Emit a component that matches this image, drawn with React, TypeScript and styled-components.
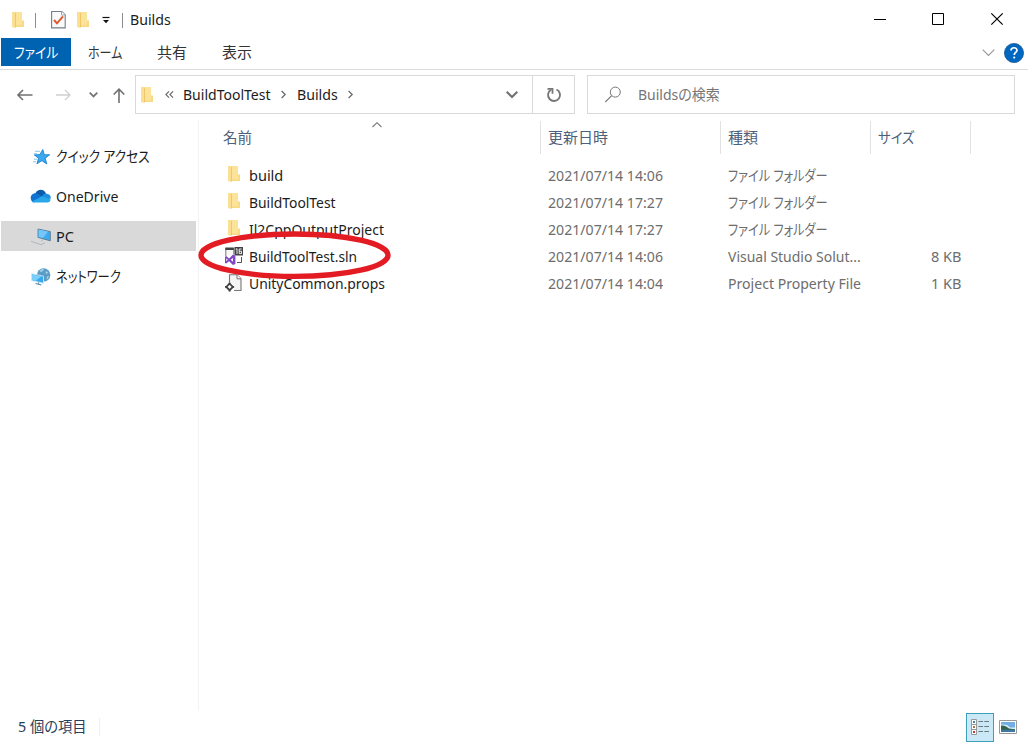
import React, { useLayoutEffect, useRef, useState } from "react";
import styled, { createGlobalStyle } from "styled-components";

const GlobalStyle = createGlobalStyle`
  * { box-sizing: border-box; }
  html, body { margin: 0; padding: 0; background: #fff; }
  body {
    font-family: "Noto Sans", "Noto Sans CJK JP", sans-serif;
    font-size: 15px;
    color: #1c1c1c;
    overflow: hidden;
  }
`;

const FitBox = styled.span<{ $w: number; $color?: string }>`
  display: block;
  flex: none;
  width: ${(p) => p.$w}px;
  height: 22px;
  line-height: 20px;
  white-space: nowrap;
  color: ${(p) => p.$color ?? "inherit"};
`;
const FitInner = styled.span<{ $size: number }>`
  display: inline-block;
  font-size: ${(p) => p.$size}px;
  transform-origin: 0 50%;
  font-feature-settings: "palt";
`;

/* A single line of text condensed horizontally to its column width. */
function Text({ w, color, size = 14.5, children }: { w: number; color?: string; size?: number; children: string }) {
  const ref = useRef<HTMLSpanElement>(null);
  const [scale, setScale] = useState(1);
  useLayoutEffect(() => {
    if (ref.current) setScale(w / ref.current.offsetWidth);
  }, [w, children]);
  return (
    <FitBox $w={w} $color={color}>
      <FitInner ref={ref} $size={size} style={{ transform: `scaleX(${scale})` }}>
        {children}
      </FitInner>
    </FitBox>
  );
}

const Window = styled.div`
  position: relative;
  width: 1028px;
  height: 743px;
  display: flex;
  flex-direction: column;
  background: #fff;
`;
const TitleBar = styled.header`
  height: 38px;
  display: flex;
  align-items: center;
  padding: 1px 23px 0 11px;
`;
const Separator = styled.i<{ $ml: number; $mr: number }>`
  width: 1px;
  height: 15px;
  background: #8c8c8c;
  margin: 1px ${(p) => p.$mr}px 0 ${(p) => p.$ml}px;
`;
const WindowButtons = styled.div`
  width: 130px;
  display: flex;
  margin: 0 2px 2px auto;
`;
const Icon = styled.svg`
  display: block;
  flex: none;
  overflow: visible;
`;
const Tabs = styled.nav`
  height: 32px;
  display: flex;
  align-items: flex-start;
  border-bottom: 1px solid #dadbdc;
  padding-left: 1px;
`;
const Tab = styled.div<{ $active?: boolean; $gap?: number }>`
  height: 28px;
  display: flex;
  align-items: center;
  padding: 2px 13px 0;
  margin-left: ${(p) => p.$gap ?? 0}px;
  background: ${(p) => (p.$active ? "#0063b1" : "transparent")};
  color: ${(p) => (p.$active ? "#fff" : "#333")};
`;
const TabTools = styled.div`
  margin: 5px 4px 0 auto;
  display: flex;
  align-items: center;
  gap: 9px;
`;
const Navigation = styled.div`
  height: 50px;
  display: flex;
  padding: 5px 13px 6px 17px;
`;
const NavButtons = styled.div`
  width: 118px;
  display: flex;
  align-items: center;
`;
const Field = styled.div<{ $w: number; $ml?: number }>`
  width: ${(p) => p.$w}px;
  height: 39px;
  margin-left: ${(p) => p.$ml ?? 0}px;
  border: 1px solid #d9d9d9;
  display: flex;
  align-items: center;
`;
const Crumbs = styled.div`
  flex: 1;
  display: flex;
  align-items: center;
  padding-left: 4px;
`;
const RefreshButton = styled.div`
  width: 42px;
  height: 37px;
  border-left: 1px solid #d9d9d9;
  display: grid;
  place-items: center;
`;
const Body = styled.main`
  flex: 1;
  display: flex;
  min-height: 0;
`;
const Sidebar = styled.aside`
  width: 199px;
  height: 591px;
  border-right: 1px solid #f3f3f3;
  padding: 21px 2px 0 1px;
  display: flex;
  flex-direction: column;
  gap: 10px;
`;
const SideItem = styled.div<{ $selected?: boolean }>`
  height: 30px;
  display: flex;
  align-items: center;
  gap: 5px;
  padding: 1px 0 0 29px;
  background: ${(p) => (p.$selected ? "#d9d9d9" : "transparent")};
`;
const Listing = styled.section`
  flex: 1;
`;
const columns = "342px 180px 150px 100px";
const Head = styled.div`
  display: grid;
  grid-template-columns: ${columns};
  height: 33px;
  margin-top: 1px;
`;
const HeadCell = styled.div<{ $pl: number }>`
  display: flex;
  align-items: center;
  padding-left: ${(p) => p.$pl}px;
  border-right: 1px solid #e2e2e2;
  color: #4c607a;
`;
const SortMark = styled.div`
  align-self: flex-start;
  margin: 1px 0 0 120px;
`;
const Rows = styled.div`
  padding-top: 8px;
`;
const Row = styled.div`
  display: grid;
  grid-template-columns: ${columns};
  height: 27px;
  align-items: center;
  color: #6d6d6d;
`;
const NameCell = styled.div`
  display: flex;
  align-items: center;
  padding-left: 26px;
  gap: 6px;
  color: #1c1c1c;
`;
const Cell = styled.div`
  padding-left: 7px;
`;
const SizeCell = styled.div`
  display: flex;
  justify-content: flex-end;
  padding-right: 10px;
`;
const StatusBar = styled.footer`
  height: 31px;
  display: flex;
  align-items: center;
  padding: 0 11px 1px 18px;
`;
const StatusDivider = styled.i`
  width: 1px;
  height: 18px;
  background: #f0f0f0;
  margin-left: 12px;
`;
const ViewButtons = styled.div`
  margin-left: auto;
  display: flex;
  align-items: center;
  gap: 5px;
`;
const DetailsButton = styled.div`
  width: 28px;
  height: 29px;
  border: 1px solid #3d9fb8;
  background: #cbe8f6;
  display: grid;
  place-items: center;
`;
const Highlight = styled.svg`
  position: absolute;
  left: 196px;
  top: 228px;
  pointer-events: none;
`;

function Folder() {
  return (
    <Icon width="14" height="18" viewBox="0 0 14 18">
      <path d="M1 1h10v8.500L13 11v5H1z" fill="#f9dc8b" />
      <path d="M4.500 1H11v13.500H4.500z" fill="#fce39a" />
      <path d="M11 9.500h2V16H4.500v-1.500H11z" fill="#f8da85" />
      <path d="M1 1l3 1v15l-3-1z" fill="#fbdf92" />
      <path d="M4 2h.9v14.500H4z" fill="#eec567" />
    </Icon>
  );
}

function ChevronDown({ w = 10, color = "#666", sw = 1.8 }: { w?: number; color?: string; sw?: number }) {
  return (
    <Icon width={w} height={w / 2 + 1} viewBox={`0 0 ${w} ${w / 2 + 1}`}>
      <path d={`M.7 .7L${w / 2} ${w / 2}L${w - 0.7} .7`} fill="none" stroke={color} strokeWidth={sw} />
    </Icon>
  );
}

function CrumbArrow() {
  return (
    <Icon width="5" height="8" viewBox="0 0 5 8">
      <path d="M.6 0L4.200 3.500L.6 7" fill="none" stroke="#666" strokeWidth="1.200" />
    </Icon>
  );
}

function Solution() {
  return (
    <Icon width="18" height="18" viewBox="0 0 18 18">
      <path d="M.8 9V1.500h8v6" fill="#f7f7f7" stroke="#777" strokeWidth="1" />
      <path d="M.3 .5h8.500V3H.3z" fill="#424242" />
      <path d="M9.500 0H18v8.500H9.500z" fill="#424242" />
      <path d="M10.800 2.300l1.200-.7v5.400M16.700 2h-2.500v4.600h2.300V4.200h-2.300" fill="none" stroke="#fff" strokeWidth=".9" />
      <path d="M16.500 10v5.500H12" fill="none" stroke="#555" />
      <path fillRule="evenodd" d="M0 9.700l1.200-.6 2.900 2.300L8 7.600l2.400 1.100v8.200L8 18l-3.900-3.800-2.900 2.300L0 15.900zM1.300 11.300v3l1.500-1.500zM8 10.900l-2.300 1.900L8 14.700z" fill="#8148c4" />
    </Icon>
  );
}

function Props() {
  return (
    <Icon width="18" height="18" viewBox="0 0 18 18">
      <path d="M4.500 8V.800h7.500l4 4V16.500H9" fill="#f4f4f4" stroke="#777" strokeWidth="1.100" />
      <path d="M12 .800v4h4" fill="#fff" stroke="#777" />
      <circle cx="4.600" cy="12.900" r="4.600" fill="#fff" />
      <path d="M4.600 9.600l3.300 3.300-3.300 3.300-3.300-3.300z" fill="#fff" stroke="#424242" strokeWidth="1.800" />
      <path d="M4.600 8.400v2M4.600 15.400v2M.1 12.900h2M7.100 12.900h2" stroke="#424242" strokeWidth="1.800" />
    </Icon>
  );
}

function Star() {
  return (
    <Icon width="21" height="18" viewBox="0 0 21 18">
      <path d="M12.800 1.500l1.500 5.300 5.400-.1-4.500 3.500 1.600 5.800-4.900-3.300-5 3.100 1.700-5.600-4.300-3.300 5.600-.3z" fill="#3aa9ee" stroke="#1f83cc" strokeWidth=".9" strokeLinejoin="round" />
      <path d="M5 3.300h5M4 5.700h3M4 11.200h3M3 13.700h3" stroke="#7cc1ec" strokeWidth=".9" />
    </Icon>
  );
}

function Cloud() {
  return (
    <Icon width="21" height="18" viewBox="0 0 21 18">
      <path d="M5.500 5.300C7 1.300 13.500 0 16 5.500l-3 4L3.500 9z" fill="#0b5cab" />
      <path d="M1 11.500C-.2 7.500 3 4.600 6.800 5.300l6 4L4 14.500C2.500 14.500 1.300 13 1 11.500z" fill="#1174d0" />
      <path d="M12 8.500c1-3 4-3.600 5.500-2.400 2.500.300 3.500 2.400 3.300 4.500l-4 1z" fill="#1c90e0" />
      <path d="M2 13.500L12 8.300l8.700 3.200c-.4 1.900-1.700 3-3.200 3H4.500c-1 0-1.900-.3-2.500-1z" fill="#28a8ea" />
    </Icon>
  );
}

function Computer() {
  return (
    <Icon width="21" height="18" viewBox="0 0 21 18">
      <path d="M8 1l12.300 2.600v9.200L8 9.400z" fill="#3fa9f0" stroke="#5a7b91" strokeWidth=".9" />
      <path d="M8.500 1.600l9.500 2-5 6.500-4.500-1.200z" fill="#74c6fa" />
      <path d="M1 13.300l10 3.300 4-1.700M12.500 11.500l-1 2" fill="none" stroke="#aab3b8" strokeWidth=".9" />
    </Icon>
  );
}

function Network() {
  return (
    <Icon width="21" height="18" viewBox="0 0 21 18">
      <circle cx="13.600" cy="6.900" r="6.700" fill="#5c9cc4" />
      <path d="M9.500 3c1.500-1.500 3-2.200 4.500-1.800l-1 1.800-2 1zM16 3l2 1.500-1 1.500-1.500-1zM17 8.500l2-.7-1 2.700-1.500 1z" fill="#a5d3e6" />
      <path d="M1.500 5.700l12 2.400v7.200l-12-2.800z" fill="#38a9ef" stroke="#d5ecf7" strokeWidth=".8" />
      <path d="M2 6.400l9.500 1.900L5.500 12.900l-3.500-.8z" fill="#79cefa" />
      <path d="M8.500 14.500v1.600M5.500 15.500l6 1.500" fill="none" stroke="#5b8aa7" strokeWidth="1.200" />
    </Icon>
  );
}

const files: { icon: React.ReactNode; drop?: boolean; name: string; w: number; date: string; type: string; tw: number; size?: string }[] = [
  { icon: <Folder />, name: "build", w: 34, date: "2021/07/14 14:06", type: "ファイル フォルダー", tw: 100 },
  { icon: <Folder />, name: "BuildToolTest", w: 87, date: "2021/07/14 17:27", type: "ファイル フォルダー", tw: 100 },
  { icon: <Folder />, name: "Il2CppOutputProject", w: 135, date: "2021/07/14 17:27", type: "ファイル フォルダー", tw: 100 },
  { icon: <Solution />, drop: true, name: "BuildToolTest.sln", w: 108, date: "2021/07/14 14:06", type: "Visual Studio Solut...", tw: 133, size: "8 KB" },
  { icon: <Props />, drop: true, name: "UnityCommon.props", w: 136, date: "2021/07/14 14:04", type: "Project Property File", tw: 133, size: "1 KB" },
];

const IconSlot = styled.div<{ $drop?: boolean }>`
  width: 18px;
  display: flex;
  justify-content: center;
  padding-bottom: ${(p) => (p.$drop ? 2 : 4)}px;
`;
const Gap = styled.i<{ $w: number }>`
  flex: none;
  width: ${(p) => p.$w}px;
`;

export default function App() {
  return (
    <Window>
      <GlobalStyle />
      <TitleBar>
        <Folder />
        <Separator $ml={10} $mr={15} />
        <Icon width="15" height="19" viewBox="0 0 15 19">
          <path d="M.6 1.500h10.200l3.400 3.300v13.100H.6z" fill="#f7f9fb" stroke="#777e88" strokeWidth="1.100" />
          <path d="M10.500 1.500v3.500h3.700" fill="#fff" stroke="#a0a5ab" />
          <path d="M3 10l3 3.300 6-7" fill="none" stroke="#e2582a" strokeWidth="2" />
        </Icon>
        <Gap $w={10} />
        <Folder />
        <Gap $w={12} />
        <Icon width="8" height="7" viewBox="0 0 8 7">
          <path d="M.5 1.500h7" stroke="#111" strokeWidth="1.200" />
          <path d="M1 4h6L4 7.200z" fill="#111" />
        </Icon>
        <Separator $ml={12} $mr={7} />
        <Text w={41}>Builds</Text>
        <WindowButtons>
          <Icon width="14" height="12" viewBox="0 0 14 12"><path d="M1 6.500h12" stroke="#000" /></Icon>
          <Gap $w={45} />
          <Icon width="12" height="12" viewBox="0 0 12 12"><path d="M.5 .5h11v11H.5z" fill="none" stroke="#000" /></Icon>
          <Gap $w={47} />
          <Icon width="12" height="12" viewBox="0 0 12 12"><path d="M.3 .3l11.400 11.400M11.700 .3L.3 11.700" stroke="#000" strokeWidth="1.200" /></Icon>
        </WindowButtons>
      </TitleBar>
      <Tabs>
        <Tab $active><Text w={44}>ファイル</Text></Tab>
        <Tab $gap={4}><Text w={34}>ホーム</Text></Tab>
        <Tab $gap={9}><Text w={30}>共有</Text></Tab>
        <Tab $gap={9}><Text w={30}>表示</Text></Tab>
        <TabTools>
          <ChevronDown w={13} color="#999" sw={1.2} />
          <Icon width="20" height="20" viewBox="0 0 20 20">
            <circle cx="10" cy="10" r="9.600" fill="#0067c0" stroke="#15508c" strokeWidth=".7" />
            <path d="M7 7.400C7 3.900 13 3.900 13 7.300c0 2.100-2.800 2.200-2.800 4.700" fill="none" stroke="#fff" strokeWidth="1.700" />
            <circle cx="10.200" cy="14.600" r="1.100" fill="#fff" />
          </Icon>
        </TabTools>
      </Tabs>
      <Navigation>
        <NavButtons>
          <Icon width="16" height="12" viewBox="0 0 16 12"><path d="M15.500 6H1M6 1L1 6l5 5" fill="none" stroke="#707070" strokeWidth="1.600" /></Icon>
          <Gap $w={23} />
          <Icon width="15" height="12" viewBox="0 0 15 12"><path d="M0 6h14M9 1l5 5-5 5" fill="none" stroke="#d0d0d0" strokeWidth="1.300" /></Icon>
          <Gap $w={18} />
          <ChevronDown w={9} color="#777" />
          <Gap $w={15} />
          <Icon width="12" height="15" viewBox="0 0 12 15"><path d="M6 16V2M.7 7.500L6 2.200l5.300 5.300" fill="none" stroke="#707070" strokeWidth="1.600" /></Icon>
        </NavButtons>
        <Field $w={440}>
          <Crumbs>
            <Folder />
            <Gap $w={11} />
            <Icon width="9" height="7" viewBox="0 0 9 7"><path d="M4 .4L.9 3.500L4 6.600M8 .4L4.900 3.500L8 6.600" fill="none" stroke="#666" strokeWidth="1.100" /></Icon>
            <Gap $w={9} />
            <Text w={88}>BuildToolTest</Text>
            <Gap $w={10} />
            <CrumbArrow />
            <Gap $w={11} />
            <Text w={41}>Builds</Text>
            <Gap $w={10} />
            <CrumbArrow />
          </Crumbs>
          <ChevronDown w={12} color="#707070" sw={2} />
          <Gap $w={14} />
          <RefreshButton>
            <Icon width="16" height="16" viewBox="0 0 16 16">
              <path d="M10.500 2.500a6 6 0 1 1-5.500.3" fill="none" stroke="#777" strokeWidth="1.900" />
              <path d="M1.500 1.800h5v5" fill="none" stroke="#777" strokeWidth="1.800" />
            </Icon>
          </RefreshButton>
        </Field>
        <Field $w={428} $ml={12}>
          <Gap $w={17} />
          <Icon width="17" height="16" viewBox="0 0 17 16">
            <circle cx="10.300" cy="5.100" r="5" fill="none" stroke="#777" strokeWidth="1" />
            <path d="M6.700 8.700L.3 15" stroke="#777" strokeWidth="1.100" />
          </Icon>
          <Gap $w={16} />
          <Text w={82} color="#757575">Buildsの検索</Text>
        </Field>
      </Navigation>
      <Body>
        <Sidebar>
          <SideItem><Star /><Text w={94}>クイック アクセス</Text></SideItem>
          <SideItem><Cloud /><Text w={62}>OneDrive</Text></SideItem>
          <SideItem $selected><Computer /><Text w={18}>PC</Text></SideItem>
          <SideItem><Network /><Text w={65}>ネットワーク</Text></SideItem>
        </Sidebar>
        <Listing>
          <Head>
            <HeadCell $pl={24}>
              <Text w={29}>名前</Text>
              <SortMark>
                <Icon width="10" height="6" viewBox="0 0 10 6"><path d="M.5 5L5 .7L9.500 5" fill="none" stroke="#777" strokeWidth="1.100" /></Icon>
              </SortMark>
            </HeadCell>
            <HeadCell $pl={7}><Text w={60}>更新日時</Text></HeadCell>
            <HeadCell $pl={7}><Text w={30}>種類</Text></HeadCell>
            <HeadCell $pl={7}><Text w={36}>サイズ</Text></HeadCell>
          </Head>
          <Rows>
            {files.map((f) => (
              <Row key={f.name}>
                <NameCell>
                  <IconSlot $drop={f.drop}>{f.icon}</IconSlot>
                  <Text w={f.w}>{f.name}</Text>
                </NameCell>
                <Cell><Text w={115}>{f.date}</Text></Cell>
                <Cell><Text w={f.tw}>{f.type}</Text></Cell>
                <SizeCell>{f.size && <Text w={30}>{f.size}</Text>}</SizeCell>
              </Row>
            ))}
          </Rows>
        </Listing>
      </Body>
      <StatusBar>
        <Text w={69} color="#29405c">5 個の項目</Text>
        <StatusDivider />
        <ViewButtons>
          <DetailsButton>
            <Icon width="18" height="16" viewBox="0 0 18 16">
              <path d="M.5 .5h5v15h-5zM.5 5.500h5M.5 10.500h5" fill="#fff" stroke="#999" />
              <path d="M2 2h2v2H2z" fill="#417fb1" />
              <path d="M2 7h2v2H2z" fill="#a17750" />
              <path d="M2 12h2v2H2z" fill="#c23b2b" />
              <path d="M7.500 2.500h4.500M13.300 2.500H18M7.500 7.500h4.500M13.300 7.500H18M7.500 12.500h4.500M13.300 12.500H18" stroke="#6c7981" />
            </Icon>
          </DetailsButton>
          <Icon width="18" height="14" viewBox="0 0 18 14">
            <path d="M.5 .5h17v13H.5z" fill="#fff" stroke="#999" />
            <path d="M2 2h14v10H2z" fill="#71aee5" />
            <path d="M2 4.500l6 .5 3 2.500h5V9H2z" fill="#d9edf5" />
            <path d="M2 5.500c3-.5 5 .5 8 3l6 .8v.7H2z" fill="#34604e" />
            <path d="M2 9.700h14V12H2z" fill="#3c79a3" />
          </Icon>
        </ViewButtons>
      </StatusBar>
      <Highlight width="198" height="54" viewBox="0 0 198 54">
        <ellipse cx="98.500" cy="27.200" rx="93.500" ry="21.200" fill="none" stroke="#e31b23" strokeWidth="5.400" />
      </Highlight>
    </Window>
  );
}
